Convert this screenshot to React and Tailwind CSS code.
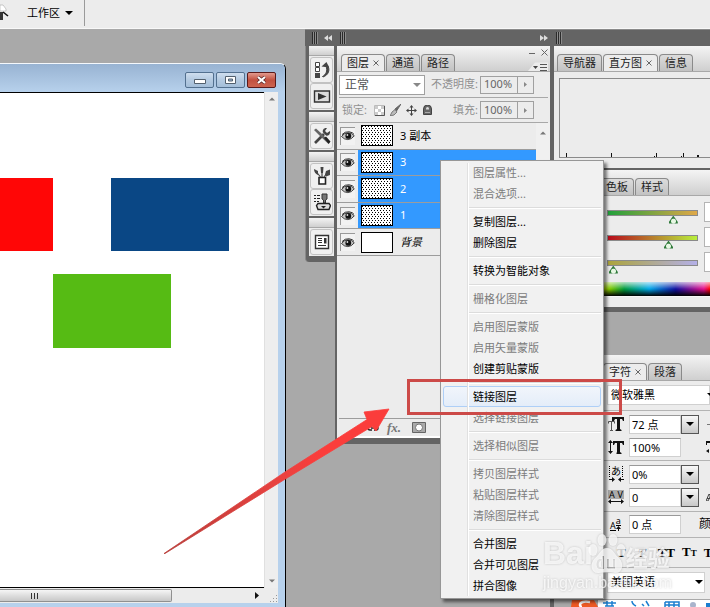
import React from 'react';
import clsx from 'clsx';

const layers = [
    { name: '3 副本', pattern: true },
    { name: '3', pattern: true, selected: true },
    { name: '2', pattern: true, selected: true },
    { name: '1', pattern: true, selected: true },
    { name: '背景', italic: true },
];

const menuGroups = [
    [{ label: '图层属性...', disabled: true }, { label: '混合选项...', disabled: true }],
    [{ label: '复制图层...' }, { label: '删除图层' }],
    [{ label: '转换为智能对象' }],
    [{ label: '栅格化图层', disabled: true }],
    [{ label: '启用图层蒙版', disabled: true }, { label: '启用矢量蒙版', disabled: true }, { label: '创建剪贴蒙版' }],
    [{ label: '链接图层', active: true }, { label: '选择链接图层', disabled: true }],
    [{ label: '选择相似图层', disabled: true }],
    [{ label: '拷贝图层样式', disabled: true }, { label: '粘贴图层样式', disabled: true }, { label: '清除图层样式', disabled: true }],
    [{ label: '合并图层' }, { label: '合并可见图层' }, { label: '拼合图像' }],
];

const sliders = [
    { label: '红', value: 76, track: '[&::-webkit-slider-runnable-track]:bg-[linear-gradient(90deg,#22a03c,#e0a848)]' },
    { label: '绿', value: 70, track: '[&::-webkit-slider-runnable-track]:bg-[linear-gradient(90deg,#b80c1c,#b8f03c)]' },
    { label: '蓝', value: 1, track: '[&::-webkit-slider-runnable-track]:bg-[linear-gradient(90deg,#aca43c,#b4b0e8)]' },
];

const Grip = ({ className }) => (
    <svg width="6" height="12" viewBox="0 0 6 12" className={className} shapeRendering="crispEdges">
        <path d="M0 0h1v12H0zM2 0h1v12H2zM4 0h1v12H4z" fill="#2b2b2b" />
        <path d="M1 0h1v12H1zM3 0h1v12H3zM5 0h1v12H5z" fill="#8c8c8c" />
    </svg>
);

const Down = ({ className = 'text-black' }) => (
    <svg width="8" height="4" viewBox="0 0 8 4" className={clsx('shrink-0', className)}>
        <path d="M0 0h8L4 4z" fill="currentColor" />
    </svg>
);

const Tab = ({ children, active }) => (
    <button
        type="button"
        role="tab"
        aria-selected={!!active}
        className={clsx(
            'h-[17px] shrink-0 px-[5px] flex items-center gap-[4px] rounded-t-[4px] border border-b-0 border-[#8a8a8a] text-[11px] leading-[16px] text-[#222]',
            active ? 'bg-[#ececec]' : 'bg-linear-to-b from-[#dcdcdc] to-[#c2c2c2]'
        )}
    >
        {children}
        {active && (
            <svg width="6" height="6" viewBox="0 0 6 6" aria-hidden="true">
                <path d="M0.5 0.5l5 5M5.5 0.5l-5 5" stroke="#666" />
            </svg>
        )}
    </button>
);

const TabBar = ({ children, className }) => (
    <div role="tablist" className={clsx('h-[26px] shrink-0 flex items-end border-b border-[#a8a8a8] bg-linear-to-b from-[#f4f4f4] to-[#cfcfcf]', className)}>
        {children}
    </div>
);

const Eye = () => (
    <svg width="14" height="10" viewBox="0 0 14 10" aria-hidden="true">
        <path d="M0.5 5.5Q3 1.8 7 1.8T13.3 4.8Q10.5 8.6 6.8 8.6T0.5 5.5z" fill="#c4c4c4" stroke="#333" strokeWidth="0.9" />
        <path d="M1 3.6Q4 0.3 8 0.8T13 3.4" fill="none" stroke="#333" strokeWidth="1" />
        <circle cx="7.3" cy="4.9" r="2.9" fill="#111" />
        <circle cx="6.4" cy="4" r="0.9" fill="#ddd" />
    </svg>
);

/* ---- icons of the collapsed dock ---- */
const HistoryIcon = () => (
    <svg width="18" height="18" viewBox="0 0 18 18">
        <path d="M2.5 1.5h4v4h-4zM2.5 6.5h4v4h-4z" fill="#fff" stroke="#444" />
        <path d="M2 12h5v5H2z" fill="#444" />
        <path d="M9.500 15.500C13 13.500 14.800 10 13 5l1.500-1c3 5 1 10-4.500 12z" fill="#444" stroke="#444" />
        <path d="M8.500 5.500L13.500 1l2.500 5.500z" fill="#444" />
    </svg>
);
const ActionsIcon = () => (
    <svg width="18" height="18" viewBox="0 0 18 18">
        <path d="M1.5 4h15v11h-15z" fill="#ddd" stroke="#333" strokeWidth="1.4" />
        <path d="M5 6l8.5 3.5L5 13z" fill="#333" />
    </svg>
);
const ToolsIcon = () => (
    <svg width="18" height="18" viewBox="0 0 18 18">
        <path d="M2 16L11 7" stroke="#444" strokeWidth="2.600" />
        <path d="M17 4l-3 2-2-2 2-3c-3-.6-5 2-4 4.500l3 3c2.500 1 4.600-1.500 4-4.500z" fill="#444" />
        <path d="M1 3l2-1.500L9 7l8 8.500-1.500 1.500L7 9z" fill="#666" />
        <path d="M11 11l2-1.500 4.500 5-2 2.200z" fill="#222" />
    </svg>
);
const BrushesIcon = () => (
    <svg width="18" height="18" viewBox="0 0 18 18">
        <path d="M6 10.500h6.500v6.500H6z" fill="#fff" stroke="#222" strokeWidth="1.600" />
        <path d="M7.500 10L3.500 5M9 10V4M11 10l3-4" stroke="#444" strokeWidth="1.200" />
        <path d="M1 2l4 2v4C2.500 7 1 5 1 2zM7.500 0h3l-.5 6H8zM13 4l4-1.500V8l-4 1.500-1-2z" fill="#444" />
    </svg>
);
const CloneIcon = () => (
    <svg width="18" height="18" viewBox="0 0 18 18">
        <path d="M1 2h2v1H1zM4 2h3v1H4zM1 5h2v1H1zM4 5h3v1H4zM1 8h2v1H1zM4 8h2v1H4z" fill="#222" />
        <path d="M9 1h5v5l-1.500 1v3h-2V7L9 6z" fill="#777" stroke="#333" />
        <path d="M5 10.500h11l1.500 2-1.500 4H5l-1.500-4z" fill="#ddd" stroke="#222" strokeWidth="1.400" />
        <path d="M8 13h5l-2.500 2.500z" fill="#222" />
    </svg>
);
const CompsIcon = () => (
    <svg width="18" height="18" viewBox="0 0 18 18">
        <path d="M2.500 2.500h13v13h-13z" fill="#fff" stroke="#333" strokeWidth="1.400" />
        <path d="M5 5.500h4M5 7.500h4M5 9.500h4M5 12.500h8" stroke="#333" />
        <path d="M11 5h2.500v5.500H11z" fill="#333" />
    </svg>
);

const dockGroups = [
    [{ label: '历史记录', icon: HistoryIcon }, { label: '动作', icon: ActionsIcon }],
    [{ label: '工具预设', icon: ToolsIcon }],
    [{ label: '画笔', icon: BrushesIcon }, { label: '仿制源', icon: CloneIcon }],
    [{ label: '图层复合', icon: CompsIcon }],
];

const Toolbar = () => (
    <header className="h-[29px] shrink-0 flex items-start bg-[#ececec] border-b border-[#f8f8f8]">
        <svg width="9" height="20" viewBox="0 0 9 20" className="mt-[4px]">
            <path d="M0 1h3l3 4v2H0z" fill="#fff" stroke="#aaa" strokeWidth="0.600" />
            <path d="M0 8h3v8H0z" fill="#333" />
            <path d="M3 8l5 4" stroke="#111" strokeWidth="1.600" />
        </svg>
        <button type="button" className="ml-[18px] h-[26px] flex items-center gap-[5px] text-[11px]">
            工作区
            <Down />
        </button>
        <div className="ml-[11px] w-px h-[26px] bg-[#9a9a9a]" />
    </header>
);

const DocumentWindow = () => (
    <section className="flex-1 min-w-0 pt-[34px] pr-[19px] flex">
        <div className="flex-1 min-w-0 flex flex-col rounded-tr-[6px] border-t border-r border-t-[#f4f8fc] border-r-black bg-[#b7d1ec] overflow-hidden">
            <div className="h-[28px] shrink-0 pr-[9px] flex items-center justify-end gap-[2px] pt-[4px] bg-linear-to-b from-[#98b3d2] to-[#b7d1ec]">
                <button type="button" aria-label="最小化" className="w-[29px] h-[16px] grid place-items-center rounded-[2px] border border-[#53708f] bg-linear-to-b from-[#cfdeee] via-[#b4cae1] to-[#a4bed9]">
                    <svg width="12" height="8" viewBox="0 0 12 8"><path d="M0.500 3.500h11v4h-11z" fill="#fff" stroke="#53606e" /></svg>
                </button>
                <button type="button" aria-label="最大化" className="w-[29px] h-[16px] grid place-items-center rounded-[2px] border border-[#53708f] bg-linear-to-b from-[#cfdeee] via-[#b4cae1] to-[#a4bed9]">
                    <svg width="11" height="8" viewBox="0 0 11 8"><path d="M0.500 0.500h10v7h-10z" fill="#fff" stroke="#53606e" /><path d="M3.500 3h4v2h-4z" fill="#9db8d5" stroke="#53606e" /></svg>
                </button>
                <button type="button" aria-label="关闭" className="w-[29px] h-[16px] grid place-items-center rounded-[2px] border border-[#5a1a1a] bg-linear-to-b from-[#e29a8e] via-[#c2503f] to-[#cc6450]">
                    <svg width="11" height="8" viewBox="0 0 11 8"><path d="M2 1l7 6M9 1L2 7" stroke="#5a2a2a" strokeWidth="3.600" /><path d="M2 1l7 6M9 1L2 7" stroke="#fff" strokeWidth="2.200" /></svg>
                </button>
            </div>
            <div className="flex-1 min-h-0 mr-[7px] mb-[4px] flex flex-col bg-[#ececec]">
                <div className="flex-1 min-h-0 flex">
                    <main className="flex-1 min-w-0 border-y border-black bg-white pt-[85px]">
                        <div className="flex gap-[58px]">
                            <div className="w-[53px] h-[73px] bg-[#ff0606]" />
                            <div className="w-[118px] h-[73px] bg-[#0a4785]" />
                        </div>
                        <div className="mt-[23px] ml-[53px] w-[118px] h-[74px] bg-[#56bb14]" />
                    </main>
                    <div className="w-[14px] flex flex-col items-center justify-between py-[5px] border-l border-[#e0e0e0] bg-[#eeeeee]">
                        <Down className="text-[#777] rotate-180 w-[6px]" />
                        <Down className="text-[#777] w-[6px]" />
                    </div>
                </div>
                <div className="h-[15px] shrink-0 flex items-center">
                    <div className="w-[172px] h-[13px] flex items-center pl-[31px] gap-[2px] rounded-r-[2px] border border-l-0 border-[#909090] bg-linear-to-b from-[#f6f6f6] via-[#dedede] to-[#c8c8c8]">
                        <i className="w-px h-[6px] bg-[#333]" />
                        <i className="w-px h-[6px] bg-[#333]" />
                        <i className="w-px h-[6px] bg-[#333]" />
                    </div>
                    <svg width="4" height="7" viewBox="0 0 4 7" className="ml-auto"><path d="M0 0l4 3.500L0 7z" fill="#111" /></svg>
                    <svg width="8" height="8" viewBox="0 0 8 8" className="ml-[11px] self-end"><path d="M6 0h1v1H6zM3 3h1v1H3zM6 3h1v1H6zM0 6h1v1H0zM3 6h1v1H3zM6 6h1v1H6z" fill="#999" /></svg>
                </div>
            </div>
        </div>
    </section>
);

const IconDock = () => (
    <nav className="self-start w-[30px] pl-[3px] pr-px pb-[6px] rounded-bl-[4px] border-l border-[#8a8a8a] bg-[#646464] flex flex-col gap-[2px]">
        {dockGroups.map((group, i) => (
            <div key={i} className="bg-[#ececec] pb-px">
                <div className="h-[10px] mb-[1px] border-b border-[#a8a8a8] bg-linear-to-b from-[#f4f4f4] to-[#cfcfcf]" />
                {group.map(({ label, icon: Icon }) => (
                    <button key={label} type="button" aria-label={label} className="mx-auto w-[23px] h-[26px] grid place-items-center rounded-[3px] border border-[#c2c2c2] bg-[#f0f0f0]">
                        <Icon />
                    </button>
                ))}
            </div>
        ))}
    </nav>
);

const Percent = ({ id, label }) => (
    <>
        <label htmlFor={id} className="ml-auto text-[11px] text-[#909090] whitespace-nowrap">{label}</label>
        <div className="ml-[2px] w-[54px] h-[18px] shrink-0 flex border border-[#a0a0a0]">
            <input id={id} defaultValue="100%" className="w-[36px] min-w-0 pl-[3px] text-[11px] text-[#666] outline-none" />
            <button type="button" aria-label={`${label}滑块`} className="flex-1 grid place-items-center border-l border-[#a0a0a0]">
                <svg width="3" height="5" viewBox="0 0 3 5"><path d="M0 0l3 2.500L0 5z" fill="#888" /></svg>
            </button>
        </div>
    </>
);

const LayersPanel = () => (
    <section className="flex-1 min-w-0 h-[398px] border-b-[6px] border-l-2 border-[#646464] bg-[#ececec] flex flex-col">
        <TabBar className="pl-[4px] gap-px">
            <Tab active>图层</Tab>
            <Tab>通道</Tab>
            <Tab>路径</Tab>
            <div className="ml-auto self-stretch flex flex-col items-end justify-between pt-[3px] pr-[2px]">
                <svg width="19" height="7" viewBox="0 0 19 7"><path d="M0 4.500h6M12.500 0.500l6 6M18.500 0.500l-6 6" stroke="#666" /></svg>
                <svg width="20" height="9" viewBox="0 0 20 9"><path d="M0 9l7-8.500h13V9z" fill="#ececec" /><path d="M5 4h5L7.500 7z" fill="#444" /><path d="M12 2.500h7M12 5.500h7M12 8.500h7" stroke="#555" /></svg>
            </div>
        </TabBar>
        <div className="h-[26px] shrink-0 mx-[2px] pr-[14px] flex items-center border-b border-[#a8a8a8]">
            <div className="relative w-[86px] shrink-0">
                <select aria-label="混合模式" defaultValue="正常" className="appearance-none block w-full h-[20px] pl-[5px] border border-[#a0a0a0] bg-white text-[12px] leading-[18px] text-[#555]">
                    <option>正常</option>
                </select>
                <Down className="absolute right-[4px] top-[8px] text-[#888]" />
            </div>
            <Percent id="opacity" label="不透明度:" />
        </div>
        <div className="h-[25px] shrink-0 mx-[2px] pr-[14px] pl-[3px] flex items-center gap-[5px] border-b border-[#a8a8a8]">
            <span className="text-[11px] text-[#909090]">锁定:</span>
            <div className="flex items-center gap-[5px] pl-[2px]">
                <button type="button" aria-label="锁定透明像素">
                    <svg width="11" height="11" viewBox="0 0 11 11"><path d="M0.500 0.500h10v10h-10z" fill="#fff" stroke="#bbb" /><path d="M1 1h3v3H1zM7 1h3v3H7zM4 4h3v3H4zM1 7h3v3H1zM7 7h3v3H7z" fill="#ccc" /><path d="M10.500 1v9.500H1" stroke="#555" fill="none" /></svg>
                </button>
                <button type="button" aria-label="锁定图像像素">
                    <svg width="11" height="12" viewBox="0 0 11 12"><path d="M11 0L5 5l1.500 2z" fill="#666" stroke="#666" /><path d="M5 5.500L2 8l-2 4 4-1 3-3z" fill="#bbb" stroke="#666" strokeWidth="0.800" /></svg>
                </button>
                <button type="button" aria-label="锁定位置">
                    <svg width="11" height="11" viewBox="0 0 11 11"><path d="M5.500 1v9M1 5.500h9" stroke="#444" /><path d="M5.500 0l2 2.500h-4zM5.500 11l2-2.500h-4zM0 5.500l2.500-2v4zM11 5.500l-2.500-2v4z" fill="#444" /></svg>
                </button>
                <button type="button" aria-label="锁定全部" className="pl-px">
                    <svg width="9" height="10" viewBox="0 0 9 10"><path d="M0.500 9.500V4a4 4 0 018 0v5.500z" fill="#666" stroke="#444" /><path d="M3 4.500V3.500a1.500 1.500 0 013 0v1z" fill="#ddd" /><path d="M2 7.500h5" stroke="#aaa" /></svg>
                </button>
            </div>
            <div className="flex-1 flex items-center">
                <Percent id="fill" label="填充:" />
            </div>
        </div>
        <div className="flex-1 min-h-0 flex">
            <ul className="flex-1 h-[133px] grid grid-rows-5">
                {layers.map((layer) => (
                    <li key={layer.name} className="flex border-b border-[#9c9c9c]">
                        <button type="button" aria-label="可见性" className="self-center mx-[3px] w-[15px] h-[18px] grid place-items-center border-l border-t border-[#999] bg-[#f2f2f2]">
                            <Eye />
                        </button>
                        <div className={clsx('flex-1 flex items-center gap-[7px] pl-[3px] text-[11px]', layer.selected ? 'bg-[#3399ff] text-white' : 'text-black', layer.italic && 'italic')}>
                            <div
                                className={clsx(
                                    'w-[32px] h-[21px] border border-black bg-white',
                                    layer.pattern && 'bg-[conic-gradient(from_270deg_at_1px_1px,#000_90deg,transparent_0),conic-gradient(from_270deg_at_1px_1px,#000_90deg,transparent_0)] bg-size-[3px_4px] bg-[position:0_0,1px_2px]'
                                )}
                            />
                            {layer.name}
                        </div>
                    </li>
                ))}
            </ul>
            <div className="w-[14px] pt-[8px] flex justify-center bg-[#f0f0f0]">
                <Down className="rotate-180 text-[#777] w-[6px]" />
            </div>
        </div>
        <footer className="h-[20px] shrink-0 mx-[2px] flex items-center gap-[8px] pl-[28px] border-t border-[#9c9c9c] border-b-2 border-b-white">
            <svg width="12" height="8" viewBox="0 0 12 8"><path d="M5 2H3a2 2 0 000 4h2M7 2h2a2 2 0 010 4H7M4 4h4" fill="none" stroke="#222" strokeWidth="1.400" /></svg>
            <button type="button" aria-label="图层样式" className="w-[17px] text-left font-['Liberation_Serif',serif] text-[13px] leading-[14px] italic font-bold text-[#777]">fx.</button>
            <button type="button" aria-label="图层蒙版">
                <svg width="14" height="11" viewBox="0 0 14 11"><path d="M0.500 0.500h13v10h-13z" fill="#aaa" stroke="#666" /><circle cx="7" cy="5.500" r="3.500" fill="#fff" stroke="#777" /></svg>
            </button>
        </footer>
    </section>
);

const HistogramPanel = () => (
    <section className="h-[122px] shrink-0 bg-[#ececec] flex flex-col">
        <TabBar className="pl-[3px] gap-px">
            <Tab>导航器</Tab>
            <Tab active>直方图</Tab>
            <Tab>信息</Tab>
        </TabBar>
        <div className="ml-[5px] mt-[6px] h-[80px] border border-r-0 border-[#8a8a8a] flex items-end">
            <svg width="150" height="5" viewBox="0 0 150 5" shapeRendering="crispEdges">
                <path d="M6 1h1v4H6zM51 1h1v4h-1zM94 4h1v1h-1zM96 1h1v4h-1zM121 4h1v1h-1zM123 1h1v4h-1zM137 3h2v2h-2z" fill="#111" />
            </svg>
        </div>
    </section>
);

const ColorPanel = () => (
    <section className="shrink-0 bg-[#ececec] border-t-2 border-b-[5px] border-[#646464]">
        <TabBar className="pl-[46px] gap-px">
            <Tab>色板</Tab>
            <Tab>样式</Tab>
        </TabBar>
        <div className="pl-[53px] pt-[6px] h-[86px] flex flex-col gap-[4px]">
            {sliders.map((s) => (
                <div key={s.label} className="flex h-[21px]">
                    <input
                        type="range"
                        aria-label={s.label}
                        defaultValue={s.value}
                        className={clsx(
                            "appearance-none w-[91px] h-[21px] shrink-0 bg-transparent [&::-webkit-slider-runnable-track]:h-[6px] [&::-webkit-slider-runnable-track]:border [&::-webkit-slider-runnable-track]:border-[#8a8a8a] [&::-webkit-slider-thumb]:appearance-none [&::-webkit-slider-thumb]:mt-[5px] [&::-webkit-slider-thumb]:w-[9px] [&::-webkit-slider-thumb]:h-[8px] [&::-webkit-slider-thumb]:[clip-path:polygon(50%_0,100%_80%,100%_100%,0_100%,0_80%)] [&::-webkit-slider-thumb]:bg-[radial-gradient(circle_at_50%_65%,#e8f8e4_2px,#2f7a3a_3px)]",
                            s.track
                        )}
                    />
                    <input aria-label={`${s.label}数值`} className="ml-[6px] w-[30px] shrink-0 h-[20px] border border-[#b4b4b4] bg-white" />
                </div>
            ))}
        </div>
        <div className="h-[14px] bg-[linear-gradient(to_bottom,rgba(255,255,255,0.7),transparent_50%,#000),linear-gradient(90deg,#f00_0,#ff0_25%,#7cc800_36%,#009a3c_45%,#00a8e8_61%,#1010a0_78%,#e4108c_96%,#f00)]" />
        <div className="h-[11px] border-t border-[#f8f8f8]" />
    </section>
);

const CharRow = ({ icon, label, value, drop, children }) => (
    <div className="flex items-center h-[20px]">
        <div className="w-[21px] shrink-0">{icon}</div>
        <input aria-label={label} defaultValue={value} className="w-[52px] h-[19px] shrink-0 border border-[#d0d0d0] border-t-[#999] bg-white pl-[2px] text-[11px] outline-none" />
        {drop && (
            <button type="button" aria-label={`${label}列表`} className="w-[18px] h-[19px] shrink-0 grid place-items-center border border-[#555] bg-linear-to-b from-[#f8f8f8] to-[#c8c8c8]">
                <Down />
            </button>
        )}
        {children}
    </div>
);

const serif = "font-['Liberation_Serif',serif] font-bold";

const CharacterPanel = () => (
    <section className="flex-1 min-h-0 bg-[#ececec] flex flex-col text-black mb-[8px]">
        <TabBar className="pl-[49px] gap-px">
            <Tab active>字符</Tab>
            <Tab>段落</Tab>
        </TabBar>
        <div className="h-[30px] shrink-0 pl-[53px] pt-[4px] border-b border-[#b4b4b4]">
            <div className="relative">
                <select aria-label="字体" className="appearance-none block w-full h-[20px] pl-[3px] border border-[#d0d0d0] bg-white text-[11px] leading-[16px]">
                    <option>微软雅黑</option>
                </select>
                <Down className="absolute -right-[5px] top-[8px]" />
            </div>
        </div>
        <div className="h-[50px] shrink-0 pl-[54px] pt-[3px] flex flex-col gap-[3px] border-b border-[#b4b4b4]">
            <CharRow label="字号" value="72 点" drop icon={
                <svg width="18" height="16" viewBox="0 0 18 16"><path d="M0.500 7.500V5.500h6v2M3.500 5.500v9M2 14.500h3" stroke="#555" fill="none" /><path d="M4 1h12v4h-1l-1-2h-2v10l1.500 1v1h-6v-1L9 13V3H7L6 5H4z" fill="#111" /></svg>
            }>
                <span className="ml-auto w-[3px] h-px bg-[#777]" />
            </CharRow>
            <CharRow label="垂直缩放" value="100%" icon={
                <svg width="18" height="16" viewBox="0 0 18 16"><path d="M2.500 3v10" stroke="#111" /><path d="M0 4l2.500-3L5 4zM0 12l2.500 3L5 12z" fill="#111" /><path d="M5 2h11v4h-1l-1-2h-2v9l1.500 1v1h-5v-1L9 13V4H7L6 6H5z" fill="#111" /></svg>
            }>
                <svg width="4" height="14" viewBox="0 0 4 14" className="ml-auto"><path d="M0 1h4v2H1v2H0zM0 11l3-2v4z" fill="#111" /></svg>
            </CharRow>
        </div>
        <div className="h-[51px] shrink-0 pl-[54px] pt-[3px] flex flex-col gap-[3px] border-b border-[#b4b4b4]">
            <CharRow label="比例间距" value="0%" drop icon={
                <div className="flex flex-col items-center w-[16px]">
                    <span className="text-[10px] leading-[11px] border-x border-dotted border-black px-px">あ</span>
                    <svg width="15" height="5" viewBox="0 0 15 5"><path d="M0 2.500h4M11 2.500h4" stroke="#111" /><path d="M3 0l3 2.500L3 5zM12 0L9 2.500 12 5z" fill="#111" /></svg>
                </div>
            } />
            <CharRow label="字距" value="0" drop icon={
                <div className="w-[16px]">
                    <div className="bg-[#aaa] text-[9px] leading-[9px] flex justify-between px-px"><span>A</span><span>V</span></div>
                    <svg width="16" height="5" viewBox="0 0 16 5"><path d="M2 2.500h12" stroke="#111" /><path d="M3 0L0 2.500 3 5zM13 0l3 2.500L13 5z" fill="#111" /></svg>
                </div>
            }>
                <svg width="4" height="8" viewBox="0 0 4 8" className="ml-auto"><path d="M0 8l3-7 1 1v2L2 8zM1 5.500h3" fill="none" stroke="#444" /></svg>
            </CharRow>
        </div>
        <div className="h-[26px] shrink-0 pl-[54px] pt-[2px] border-b border-[#b4b4b4]">
            <CharRow label="基线偏移" value="0 点" icon={
                <div className="flex items-end pl-[2px] text-[9px] leading-[9px]">
                    <span className="border-b border-black">A</span>
                    <span className="flex flex-col items-center leading-[8px]"><span className="border-b border-black">a</span>
                        <svg width="5" height="5" viewBox="0 0 5 5"><path d="M2.500 0L5 3H3v2H2V3H0z" fill="#111" /></svg>
                    </span>
                </div>
            }>
                <span className="ml-auto w-[11px] shrink-0 overflow-hidden whitespace-nowrap text-[12px] leading-[16px]">颜</span>
            </CharRow>
        </div>
        <div className={clsx('h-[30px] shrink-0 pl-[63px] flex items-center gap-[7px] border-b border-[#b4b4b4] text-[13px] leading-[16px] overflow-hidden whitespace-nowrap', serif)}>
            <button type="button">T</button>
            <button type="button" className="italic px-[5px]">T</button>
            <button type="button">TT</button>
            <button type="button">T<span className="text-[9px]">T</span></button>
            <button type="button">T</button>
        </div>
        <div className="pl-[53px] pt-[4px]">
            <div className="relative w-[98px]">
                <select aria-label="语言" className="appearance-none block w-full h-[21px] pl-[3px] bg-white text-[11px] border border-[#d0d0d0]">
                    <option>美国英语</option>
                </select>
                <Down className="absolute right-[2px] top-[8px]" />
            </div>
        </div>
    </section>
);

const ContextMenu = () => (
    <div role="menu" className="absolute right-[106px] top-[160px] w-[164px] pt-px pb-[2px] border border-[#979797] bg-[#f1f1f1] shadow-[3px_3px_3px_rgba(0,0,0,0.5)]">
        {menuGroups.map((group, i) => (
            <div key={i}>
                {i > 0 && (
                    <div className="h-[7px] pl-[27px] pr-[2px] flex items-center">
                        <div className="h-[2px] flex-1 border-t border-[#dcdcdc] border-b border-b-white" />
                    </div>
                )}
                {group.map((item) => (
                    <button
                        key={item.label}
                        type="button"
                        role="menuitem"
                        aria-disabled={!!item.disabled}
                        className={clsx(
                            'block w-full h-[21px] px-[2px] text-left text-[11px] leading-[19px]',
                            item.disabled ? 'text-[#7c7c7c]' : 'text-black'
                        )}
                    >
                        <span className={clsx('block h-[21px] pl-[29px] rounded-[3px] border', item.active ? 'border-[#aecff7] bg-linear-to-b from-[#f1f5fb] to-[#e4edf9]' : 'border-transparent')}>
                            {item.label}
                        </span>
                    </button>
                ))}
            </div>
        ))}
        {/* gutter line left of the labels */}
        <div className="absolute left-[26px] inset-y-[2px] w-[2px] border-l border-[#e0e0e0] border-r border-r-white" />
    </div>
);

const Watermark = () => (
    <div className="absolute right-[37px] top-[532px] w-[130px] text-white/75 drop-shadow-[0_0_1px_rgba(120,120,120,0.5)] pointer-events-none">
        <div className="flex items-end h-[42px] whitespace-nowrap font-bold">
            <span className="font-['Liberation_Sans',sans-serif] text-[32px] leading-[42px]">Bai</span>
            <svg width="38" height="40" viewBox="0 0 38 40" className="shrink-0 -ml-[5px]" fill="currentColor">
                <ellipse cx="5" cy="16" rx="4.500" ry="6" />
                <ellipse cx="14" cy="6" rx="4.500" ry="6" />
                <ellipse cx="25" cy="6" rx="4.500" ry="6" />
                <ellipse cx="33" cy="16" rx="4.500" ry="6" />
                <path d="M19 14c6 0 7 6 12 10 6 6 3 16-4 15-5-1-11-1-16 0-8 1-10-9-4-15 5-4 6-10 12-10zM12 25c-4 0-5 10 0 10h4V22h-2v3zm1 2v6h-1c-2 0-2-6 1-6zm6-2v8q0 2 3 2h5V25h-2v8h-3q-1 0-1-1v-7z" fillRule="evenodd" />
            </svg>
            <span className="text-[22px] leading-[34px]">经验</span>
        </div>
        <div className="font-['Liberation_Sans',sans-serif] text-[16px] leading-[18px]">jingyan.baidu.com</div>
    </div>
);

const Annotations = () => (
    <>
        <div className="absolute right-[88px] top-[379px] w-[215px] h-[36px] border-[3px] border-[#cc4a48] pointer-events-none" />
        <svg width="226" height="146" viewBox="0 0 226 146" className="absolute right-[320px] top-[408px] pointer-events-none">
            <defs>
                <linearGradient id="arrow" x1="0" x2="1">
                    <stop offset="0" stopColor="#b83c38" />
                    <stop offset="0.500" stopColor="#e84240" />
                    <stop offset="0.700" stopColor="#fb3d3b" />
                </linearGradient>
            </defs>
            <path d="M0 145.500L121 64 203 11.500 200 4 225 1 212 23 208 18.500 123 70 1 145.500z" fill="url(#arrow)" stroke="url(#arrow)" strokeWidth="0.800" />
        </svg>
    </>
);

const ImeBar = () => (
    <div className="absolute right-0 bottom-0 w-[139px] h-[7px] flex overflow-hidden">
        <svg width="27" height="7" viewBox="0 0 27 7" className="shrink-0"><path d="M1 0h22l4 7H0z" fill="#ee5a24" /><path d="M19 2c-6-1-10 0-10 3 0 1 1 2 2 2" fill="none" stroke="#fff" strokeWidth="2.500" /></svg>
        <svg width="112" height="7" viewBox="0 0 112 7" className="flex-1 bg-white">
            <path d="M5 3h13M9 1v5M14 1v5M7 6h9M34 1c0 3 2 4 4 5M48 1l3 5M44 4l2 2M67 2h14v5M67 2v5M71 2v5M76 2v5M67 5h14" stroke="#1c7fd0" strokeWidth="1.500" fill="none" />
            <circle cx="95" cy="5" r="3" fill="#a9b4cc" />
            <path d="M108 3h4v4h-4z" fill="#1c7fd0" />
        </svg>
    </div>
);

const App = () => {
    return (
        <div className="relative h-screen overflow-hidden flex flex-col bg-[#a9a9a9] font-['Noto_Sans','Noto_Sans_CJK_SC',sans-serif]">
            <Toolbar />
            <div className="flex-1 min-h-0 flex">
                <DocumentWindow />

                {/* Docked panels */}
                <div className="w-[405px] shrink-0 flex flex-col">
                    <div className="h-[17px] shrink-0 flex items-center bg-[#646464] border-t border-[#8a8a8a]">
                        <Grip className="ml-[7px]" />
                        <svg width="8" height="6" viewBox="0 0 8 6" className="ml-[6px]"><path d="M4 0v6L0 3zM8 0v6L4 3z" fill="#ddd" /></svg>
                        <Grip className="ml-[8px]" />
                        <svg width="8" height="6" viewBox="0 0 8 6" className="ml-auto"><path d="M0 0v6l4-3zM4 0v6l4-3z" fill="#ddd" /></svg>
                        <Grip className="ml-[8px] mr-[148px]" />
                    </div>
                    <div className="flex-1 min-h-0 flex">
                        <IconDock />
                        <LayersPanel />
                        <div className="w-[160px] shrink-0 flex flex-col border-l-[4px] border-[#646464]">
                            <HistogramPanel />
                            <ColorPanel />
                            <div className="h-[43px] shrink-0" />
                            <CharacterPanel />
                        </div>
                    </div>
                </div>
            </div>

            <ImeBar />
            <ContextMenu />
            <Watermark />
            <Annotations />
        </div>
    );
};

export default App;
